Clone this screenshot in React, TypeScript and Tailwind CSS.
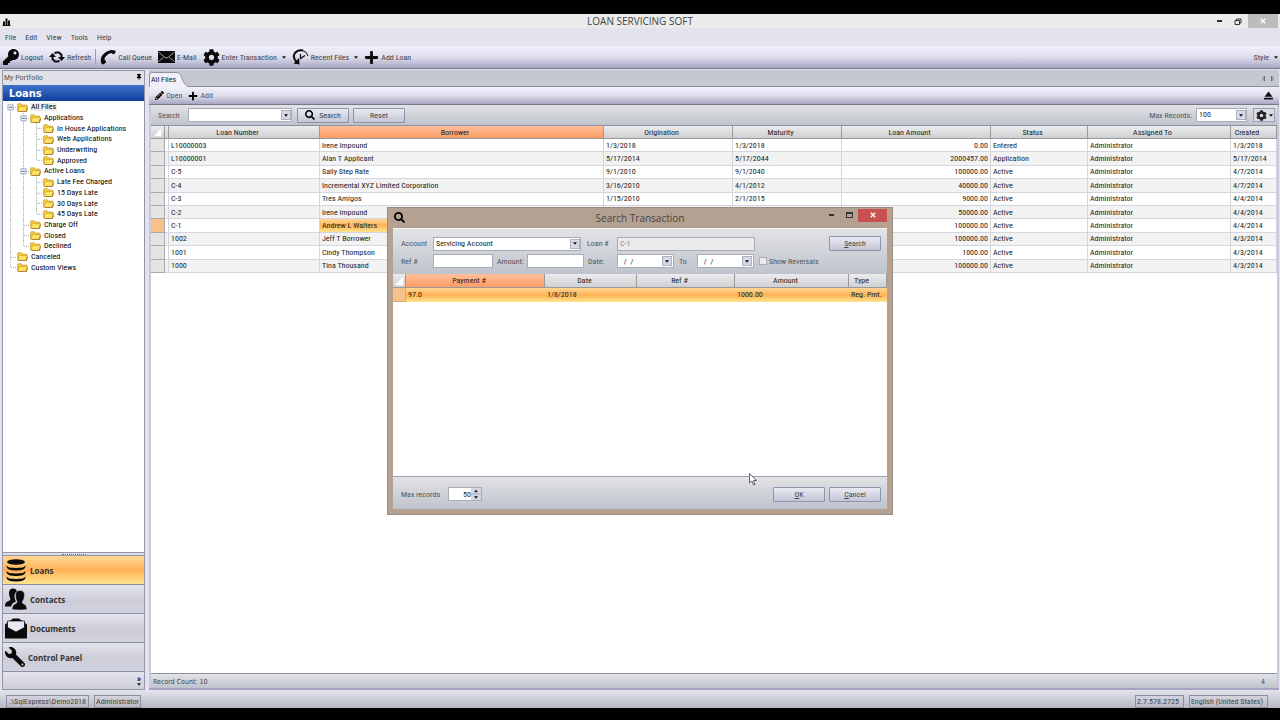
import type { ReactNode } from "react";
import { FaCog, FaKey, FaPencilAlt, FaPlus, FaSearch, FaThumbtack, FaWrench } from "react-icons/fa";

type Guide = "line" | "tee" | "end" | "box" | "boxTop" | "none";

const tree: { label: string; guides: Guide[] }[] = [
  { label: "All Files", guides: ["boxTop"] },
  { label: "Applications", guides: ["line", "box"] },
  { label: "In House Applications", guides: ["line", "line", "tee"] },
  { label: "Web Applications", guides: ["line", "line", "tee"] },
  { label: "Underwriting", guides: ["line", "line", "tee"] },
  { label: "Approved", guides: ["line", "line", "end"] },
  { label: "Active Loans", guides: ["line", "box"] },
  { label: "Late Fee Charged", guides: ["line", "line", "tee"] },
  { label: "15 Days Late", guides: ["line", "line", "tee"] },
  { label: "30 Days Late", guides: ["line", "line", "tee"] },
  { label: "45 Days Late", guides: ["line", "line", "end"] },
  { label: "Charge Off", guides: ["line", "tee"] },
  { label: "Closed", guides: ["line", "tee"] },
  { label: "Declined", guides: ["line", "end"] },
  { label: "Canceled", guides: ["tee"] },
  { label: "Custom Views", guides: ["end"] },
];

const loans = [
  ["L10000003", "Irene Impound", "1/3/2018", "1/3/2018", "0.00", "Entered", "Administrator", "1/3/2018"],
  ["L10000001", "Alan T Applicant", "5/17/2014", "5/17/2044", "2000457.00", "Application", "Administrator", "5/17/2014"],
  ["C-5", "Sally Step Rate", "9/1/2010", "9/1/2040", "100000.00", "Active", "Administrator", "4/7/2014"],
  ["C-4", "Incremental XYZ Limited Corporation", "3/16/2010", "4/1/2012", "40000.00", "Active", "Administrator", "4/7/2014"],
  ["C-3", "Tres Amigos", "1/15/2010", "2/1/2015", "9000.00", "Active", "Administrator", "4/4/2014"],
  ["C-2", "Irene Impound", "", "", "50000.00", "Active", "Administrator", "4/4/2014"],
  ["C-1", "Andrew L Walters", "", "", "100000.00", "Active", "Administrator", "4/4/2014"],
  ["1002", "Jeff T Borrower", "", "", "100000.00", "Active", "Administrator", "4/3/2014"],
  ["1001", "Cindy Thompson", "", "", "1000.00", "Active", "Administrator", "4/3/2014"],
  ["1000", "Tina Thousand", "", "", "100000.00", "Active", "Administrator", "4/3/2014"],
];

const loanColumns = ["Loan Number", "Borrower", "Origination", "Maturity", "Loan Amount", "Status", "Assigned To", "Created"];

const barGradient = "bg-linear-to-b from-[#f1f0fb] via-[#dfdeed] to-[#a8a6c3]";
const greyGradient = "bg-linear-to-b from-[#e2e3e6] to-[#bfc3cc]";
const goldGradient = "bg-linear-to-b from-[#ffd796] via-[#ffb255] to-[#ffe48e]";
const orangeHeader = "bg-linear-to-b from-[#ffc09a] to-[#ff9c66]";
const greyHeader = "bg-linear-to-b from-[#ececee] to-[#cfd0d3]";
const field = "h-[14px] border border-[#a9acb8] bg-white px-[2px] text-[8px] text-[#222]";
const button =
  "flex h-[15px] w-[52px] items-center justify-center gap-1 rounded-[1px] border border-[#8f94ac] bg-linear-to-b from-[#e9eaf2] to-[#c3c6d6] text-[#444]";

function Caret() {
  return (
    <svg viewBox="0 0 6 4" className="h-[3px] w-[4px] shrink-0" fill="#111">
      <path d="M0 0h6L3 4z" />
    </svg>
  );
}

function Folder() {
  return (
    <svg viewBox="0 0 24 20" className="h-[9px] w-[11px] shrink-0">
      <path d="M1 3.500q0-2 2-2h6l2 3h9q2 0 2 2V17H1z" fill="#f4c93a" stroke="#b98c22" strokeWidth="1.200" />
      <path d="M5 8h18l-3 10.500H2z" fill="#ffe566" stroke="#c7972a" strokeWidth="1.200" />
      <path d="M3 19h18l2-9" fill="none" stroke="#8a5c0c" strokeWidth="1.500" />
    </svg>
  );
}

function TreeGuide({ kind }: { kind: Guide }) {
  const boxed = kind === "box" || kind === "boxTop";
  const vertical = kind === "boxTop" ? "M6.500 6v5" : kind === "end" ? "M6.500 0v6" : "M6.500 0v11";
  return (
    <svg viewBox="0 0 13 11" preserveAspectRatio="none" className="h-full w-[13px] shrink-0">
      {kind !== "none" && <path d={vertical} stroke="#aaa" strokeDasharray="1 1" />}
      {kind !== "line" && kind !== "none" && <path d="M7 5.500h6" stroke="#aaa" strokeDasharray="1 1" />}
      {boxed && <rect x="4" y="3" width="5" height="5" fill="#fff" stroke="#98a6bd" />}
      {boxed && <path d="M5 5.500h3" stroke="#4560a0" />}
    </svg>
  );
}

function RefreshIcon() {
  return (
    <svg viewBox="0 0 32 28" className="h-[14px] w-[16px]" fill="none" stroke="#0b0b0b" strokeWidth="4">
      <path d="M7 12v6l5 5h6l3-2M25 16v-6l-5-5h-6l-3 2" />
      <path d="M0 14l7-8 7 8zM18 14h14l-7 8z" fill="#0b0b0b" stroke="none" />
    </svg>
  );
}

function PhoneIcon() {
  return (
    <svg viewBox="0 0 32 30" className="h-[16px] w-[16px]" fill="#0b0b0b">
      <path d="M22 1l8 1q2 1 1 3l-2 4q-1 1-3 0l-4-2Q9 12 9 20l3 4q0 2-1 3l-5 3q-2 0-3-2Q-1 19 5 11 12 3 22 1z" />
    </svg>
  );
}

function MailIcon() {
  return (
    <svg viewBox="0 0 34 24" className="h-[12px] w-[17px]">
      <rect width="34" height="24" fill="#0b0b0b" />
      <path d="M1 2l13 11q3 2 6 0L33 2M1 21l10-8M33 21l-10-8" fill="none" stroke="#dddce9" strokeWidth="1.400" />
    </svg>
  );
}

function RecentIcon() {
  return (
    <svg viewBox="0 0 34 32" className="h-[16px] w-[17px]" fill="none" stroke="#0b0b0b">
      <path d="M9 26Q0 16 6 8 12 1 22 3" strokeWidth="4" />
      <path d="M21 3q9 2 11 11" strokeWidth="2" />
      <path d="M17 10v9l9-6" strokeWidth="2.500" />
      <path d="M3 29l11-11 1 13z" fill="#0b0b0b" stroke="none" />
    </svg>
  );
}

function StackIcon() {
  return (
    <svg viewBox="0 0 44 46" className="h-[23px] w-[22px]" fill="#0b0b0b">
      <ellipse cx="22" cy="6" rx="18" ry="5.500" />
      <path d="M3 13q2 5 19 5t19-5v3q-2 7-19 7T3 16zM3 24q2 5 19 5t19-5v3q-2 7-19 7T3 27zM3 35q2 5 19 5t19-5v3q-2 7-19 7T3 38z" />
    </svg>
  );
}

function PeopleIcon() {
  return (
    <svg viewBox="0 0 44 44" className="h-[22px] w-[22px]" fill="#0b0b0b">
      <path d="M8 10Q8 1 16 1q7 0 8 6-6 3-5 12 1 5 3 8-8 2-10 10H0q0-8 5-10 6-2 6-5-3-5-3-12z" />
      <path d="M21 14q0-9 9-9t9 9q0 8-4 13-1 4 3 5 6 2 6 11-15 2-30 0 0-9 6-11 5-2 4-5-3-5-3-13z" stroke="#d7d8e4" />
    </svg>
  );
}

function DocumentsIcon() {
  return (
    <svg viewBox="0 0 44 42" className="h-[21px] w-[22px]">
      <path d="M0 13L16 1h12l16 12v28H0z" fill="#0b0b0b" />
      <path d="M5 6h34v13L22 28 5 19z" fill="#e9e9f1" stroke="#0b0b0b" strokeWidth="1.500" />
    </svg>
  );
}

function ToolItem({ icon, label, caret }: { icon: ReactNode; label: string; caret?: boolean }) {
  return (
    <button className="flex items-center gap-[2px] whitespace-nowrap">
      {icon}
      <span>{label}</span>
      {caret && <span className="ml-[3px]"><Caret /></span>}
    </button>
  );
}

function ComboBox({ label, value, className }: { label: string; value: string; className: string }) {
  return (
    <span className={`relative flex ${className}`}>
      <select aria-label={label} className={`${field} w-full appearance-none leading-none`}>
        <option>{value}</option>
      </select>
      <span className="pointer-events-none absolute inset-y-[2px] right-[1px] flex w-[10px] items-center justify-center border border-[#adb1c4] bg-[#d5d8e6]">
        <Caret />
      </span>
    </span>
  );
}

function DateBox({ label, id }: { label: string; id: string }) {
  return (
    <span className="flex h-[14px] w-[57px] items-center border border-[#a9acb8] bg-white pr-[1px]">
      <input id={id} aria-label={label} defaultValue=" /  /" className="w-full min-w-0 px-[4px] text-[8px] text-[#222]" />
      <button aria-label={`Pick ${label}`} className="flex h-[10px] w-[10px] shrink-0 items-center justify-center border border-[#adb1c4] bg-[#d5d8e6]">
        <Caret />
      </button>
    </span>
  );
}

function NavItem({ icon, label, active }: { icon: ReactNode; label: string; active?: boolean }) {
  return (
    <button
      className={`flex h-[29px] w-full items-center gap-[3px] border-b border-[#8c8fa3] pl-[2px] font-['Open_Sans',sans-serif] text-[8px] font-bold text-[#333] ${
        active ? goldGradient : "bg-linear-to-b from-[#e4e4ee] via-[#cccdd9] via-55% to-[#d2d3de]"
      }`}
    >
      {icon}
      {label}
    </button>
  );
}

function Sidebar() {
  return (
    <aside className="flex w-[143px] shrink-0 flex-col border border-[#9496a8] bg-white">
      <div className="flex h-[14px] items-center justify-between bg-[#e1e2e9] px-px pb-[2px] text-[#555]">
        <span>My Portfolio</span>
        <FaThumbtack className="mr-[1px] size-[6px] text-black" />
      </div>
      <h2 className="flex h-[16px] items-center bg-linear-to-b from-[#3f73c8] to-[#0d3f9c] pl-[6px] font-['DejaVu_Sans_Condensed','DejaVu_Sans',sans-serif] text-[11px] font-bold text-white">
        Loans
      </h2>
      <ul className="grid h-[172px] auto-rows-fr pt-px pl-[1px]">
        {tree.map(({ label, guides }) => (
          <li key={label} className="flex min-h-0 items-center whitespace-nowrap leading-none">
            {guides.map((kind, i) => (
              <TreeGuide key={i} kind={kind} />
            ))}
            <Folder />
            <span className={`ml-[2px] px-px ${label === "All Files" ? "bg-[#ececec]" : ""}`}>{label}</span>
          </li>
        ))}
      </ul>
      <div className="flex-1" />
      <div className="flex h-[4px] items-center justify-center border-y border-[#9496a8] bg-[#dcdde6]">
        <span className="w-[24px] border-t border-dotted border-[#777]" />
      </div>
      <nav>
        <NavItem icon={<StackIcon />} label="Loans" active />
        <NavItem icon={<PeopleIcon />} label="Contacts" />
        <NavItem icon={<DocumentsIcon />} label="Documents" />
        <NavItem icon={<FaWrench className="size-[20px] -scale-x-100 text-[#0b0b0b]" />} label="Control Panel" />
      </nav>
      <div className="flex h-[17px] flex-col items-end justify-center bg-linear-to-b from-[#e4e4ee] to-[#cccdd9] pr-[3px] leading-none">
        <span className="text-[9px] leading-[7px] font-bold text-black">»</span>
        <Caret />
      </div>
    </aside>
  );
}

function LoanTable() {
  return (
    <table className="h-[147px] w-full table-fixed border-separate border-spacing-0 text-[#222]">
      <colgroup>
        <col className="w-[14px]" />
        <col className="w-[4px]" />
        <col className="w-[151px]" />
        <col className="w-[284px]" />
        <col className="w-[129px]" />
        <col className="w-[109px]" />
        <col className="w-[149px]" />
        <col className="w-[97px]" />
        <col className="w-[143px]" />
        <col className="w-[46px]" />
      </colgroup>
      <thead>
        <tr className="h-[13px]">
          <th className={`${greyHeader} border-r border-b border-[#999] p-0`}>
            <svg viewBox="0 0 12 12" className="ml-[2px] size-[9px]"><path d="M11 1v10H1z" fill="#fff" /></svg>
          </th>
          <th className={`${greyHeader} border-r border-b border-[#999] p-0`} />
          {loanColumns.map((name) => (
            <th
              key={name}
              className={`border-r border-b border-[#999] pt-[2px] pr-[13px] pb-0 pl-0 leading-none font-normal whitespace-nowrap ${
                name === "Borrower" ? orangeHeader : greyHeader
              }`}
            >
              {name}
            </th>
          ))}
        </tr>
      </thead>
      <tbody>
        {loans.map((row) => {
          const selected = row[0] === "C-1";
          return (
            <tr key={row[0]} className="even:bg-[#f2f2f3]">
              <td className={`border-r border-b border-[#aaa] p-0 ${selected ? "bg-[#f9c18a]" : "bg-[#e4e4e4]"}`} />
              <td className="border-r border-b border-[#d4d5de] p-0" />
              {row.map((value, i) => (
                <td
                  key={i}
                  className={`border-r border-b border-[#d4d5de] px-[2px] pt-px pb-0 leading-none whitespace-nowrap ${i === 4 ? "text-right" : ""} ${
                    selected && i === 1 ? goldGradient : ""
                  }`}
                >
                  {value}
                </td>
              ))}
            </tr>
          );
        })}
      </tbody>
    </table>
  );
}

function FilesPanel() {
  return (
    <main className="flex min-w-0 flex-1 flex-col border-b-2 border-[#a5a3c0]">
      <div className="flex h-[17px] items-end justify-between border-b border-[#8e90a0] bg-[#c6c8d1]">
        <div className="relative -mb-px h-[15px] w-[40px]">
          <svg viewBox="0 0 40 15" className="absolute inset-0 size-full">
            <path d="M.500 15V3Q.500.500 3 .500h25q3 0 4 3 3 10 8 11.500" fill="#f0effa" stroke="#8e90a0" />
          </svg>
          <span className="relative flex h-full items-center pl-[2px] text-[#222]">All Files</span>
        </div>
        <svg viewBox="0 0 28 14" className="mr-[4px] mb-[4px] h-[7px] w-[14px]" fill="none" stroke="#555" strokeWidth="1.500">
          <path d="M7 2v10L3 7zM21 2v10l4-5z" />
        </svg>
      </div>
      <div className={`flex h-[18px] items-center justify-between border-b border-[#77778c] pr-[6px] pl-[6px] text-[#555] ${barGradient}`}>
        <div className="flex items-center gap-[6px]">
          <ToolItem icon={<FaPencilAlt className="size-[9px] text-black" />} label="Open" />
          <ToolItem icon={<FaPlus className="size-[10px] text-black" />} label="Add" />
        </div>
        <svg viewBox="0 0 16 16" className="size-[9px]"><path d="M8 1l7 9H1zM0 12h16v3H0z" fill="#111" /></svg>
      </div>
      <div className="flex flex-1 flex-col border-x-2 border-[#c9c9dc] bg-white">
        <div className={`flex h-[21px] items-center justify-between border-b border-[#8e90a0] pr-[2px] pl-[7px] text-[#555] ${greyGradient}`}>
          <div className="flex items-center">
            <span className="w-[30px]">Search</span>
            <ComboBox label="Search" value="" className="w-[104px]" />
            <button className={`${button} ml-[5px]`}>
              <FaSearch className="size-[10px] text-black" />
              Search
            </button>
            <button className={`${button} ml-[4px]`}>Reset</button>
          </div>
          <div className="flex items-center">
            <span>Max Records:</span>
            <ComboBox label="Max Records" value="100" className="ml-[4px] w-[51px]" />
            <button aria-label="Options" className="ml-[6px] flex h-[14px] w-[22px] items-center justify-center gap-[2px] border border-[#9a9fb5] bg-[#d9dbe5]">
              <FaCog className="size-[11px] text-[#222]" />
              <Caret />
            </button>
          </div>
        </div>
        <LoanTable />
        <div className="flex-1" />
        <div
          className={`flex h-[15px] items-center justify-between border-t border-[#8e90a0] pt-[2px] pr-[12px] pl-[2px] font-['DejaVu_Sans_Condensed','DejaVu_Sans',sans-serif] text-[7px] text-[#444] ${greyGradient}`}
        >
          <span>Record Count: 10</span>
          <span>4</span>
        </div>
      </div>
    </main>
  );
}

function SearchDialog() {
  return (
    <section
      role="dialog"
      aria-label="Search Transaction"
      className="flex h-[308px] w-[506px] flex-col border border-[#9c8b7e] bg-[#b5a191] px-[5px] pb-[5px]"
    >
      <header className="relative flex h-[20px] shrink-0 items-center justify-center font-['Open_Sans',sans-serif] text-[10px] text-[#444]">
        <FaSearch className="absolute top-[4px] left-[1px] size-[11px] text-black" />
        <h1>Search Transaction</h1>
        <div className="absolute top-0 right-0 flex h-[14px] items-center">
          <button aria-label="Minimize" className="mr-[12px] h-[2px] w-[5px] bg-[#333]" />
          <button aria-label="Maximize" className="mr-[5px] h-[6px] w-[7px] border border-t-2 border-[#333]" />
          <button aria-label="Close" className="flex h-[13px] w-[29px] items-center justify-center bg-[#c9504f] text-white">
            <svg viewBox="0 0 8 8" className="size-[6px]" stroke="#fff" strokeWidth="1.800"><path d="M1 1l6 6M7 1L1 7" /></svg>
          </button>
        </div>
      </header>
      <form className={`flex h-[46px] shrink-0 flex-col gap-[3px] border-t border-[#f4f4f4] pt-[7px] pr-[6px] pl-[8px] whitespace-nowrap text-[#555] ${greyGradient}`}>
        <div className="flex items-center">
          <span className="w-[32px]">Account</span>
          <ComboBox label="Account" value="Servicing Account" className="w-[148px]" />
          <label htmlFor="loan" className="ml-[6px] w-[30px]">Loan #</label>
          <input id="loan" defaultValue="C-1" disabled className="h-[14px] w-[138px] border border-[#a9acb8] bg-[#ebebec] px-[2px] text-[8px] text-[#888]" />
          <button type="button" className={`${button} ml-auto`}>
            <span><u>S</u>earch</span>
          </button>
        </div>
        <div className="flex items-center">
          <label htmlFor="ref" className="w-[32px]">Ref #</label>
          <input id="ref" className={`${field} w-[60px]`} />
          <label htmlFor="amount" className="ml-[4px] w-[30px]">Amount:</label>
          <input id="amount" className={`${field} w-[57px]`} />
          <label htmlFor="from" className="ml-[4px] w-[29px]">Date:</label>
          <DateBox id="from" label="Date from" />
          <label htmlFor="to" className="ml-[5px] w-[18px]">To</label>
          <DateBox id="to" label="Date to" />
          <input id="reversals" type="checkbox" className="ml-[5px] size-[8px] appearance-none border border-[#a9acb8] bg-[#ececf0]" />
          <label htmlFor="reversals" className="ml-[2px]">Show Reversals</label>
        </div>
      </form>
      <div className="flex-1 bg-white">
        <table className="w-full table-fixed border-separate border-spacing-0 text-[#222]">
          <colgroup>
            <col className="w-[13px]" />
            <col className="w-[139px]" />
            <col className="w-[92px]" />
            <col className="w-[98px]" />
            <col className="w-[114px]" />
            <col className="w-[38px]" />
          </colgroup>
          <thead>
            <tr className="h-[14px]">
              <th className={`${greyHeader} border-r border-b border-[#999] p-0`}>
                <svg viewBox="0 0 12 12" className="ml-[1px] size-[10px]"><path d="M11 1v10H1z" fill="#fff" /></svg>
              </th>
              {["Payment #", "Date", "Ref #", "Amount", "Type"].map((name, i) => (
                <th
                  key={name}
                  className={`border-r border-b border-[#999] pt-px pr-[12px] pb-0 pl-0 leading-none font-normal whitespace-nowrap ${
                    i === 0 ? orangeHeader : greyHeader
                  }`}
                >
                  {name}
                </th>
              ))}
            </tr>
          </thead>
          <tbody>
            <tr className="h-[14px]">
              <td className="border-r border-b border-[#d9a877] bg-[#f9c18a] p-0" />
              {["97.0", "1/8/2018", "", "1000.00", "Reg. Pmt."].map((value, i) => (
                <td key={i} className={`px-[2px] py-0 leading-none whitespace-nowrap ${goldGradient}`}>
                  {value}
                </td>
              ))}
            </tr>
          </tbody>
        </table>
      </div>
      <footer className={`flex h-[33px] shrink-0 items-center border-t border-[#a0a3ae] pt-[2px] pr-[6px] pl-[8px] text-[#555] ${greyGradient}`}>
        <label htmlFor="max" className="w-[47px]">Max records</label>
        <span className="flex h-[14px] w-[34px] items-center border border-[#a9acb8] bg-white">
          <input id="max" defaultValue="50" className="w-[22px] text-right text-[8px] text-[#222]" />
          <span className="flex h-full flex-1 flex-col bg-[#d5d8e6]">
            <button aria-label="More" className="flex flex-1 rotate-180 items-center justify-center border-t border-[#a9acb8]"><Caret /></button>
            <button aria-label="Fewer" className="flex flex-1 items-center justify-center"><Caret /></button>
          </span>
        </span>
        <button className={`${button} ml-auto`}><span><u>O</u>K</span></button>
        <button className={`${button} ml-[4px]`}><span><u>C</u>ancel</span></button>
      </footer>
    </section>
  );
}

export default function App() {
  return (
    <div className="flex min-h-screen flex-col bg-black pt-[14px] pb-[12px] font-['Roboto_Condensed','Roboto',sans-serif] text-[8px] leading-[11px]">
      <div className="relative flex flex-1 flex-col bg-[#e3e3ee]">
        <header className="flex h-[14px] items-center justify-between bg-[#ebebeb] pr-[2px] pl-[2px]">
          <div className="flex-1">
            <svg viewBox="0 0 18 18" className="size-[9px]"><path d="M2 9h4v7H2zM7 3h4v13H7zM12 7h4v9h-4zM1 16h16v2H1z" fill="#111" /></svg>
          </div>
          <span className="font-['Open_Sans',sans-serif] text-[10px] text-[#444]">LOAN SERVICING SOFT</span>
          <div className="flex h-full flex-1 items-center justify-end">
            <button aria-label="Minimize" className="mr-[12px] h-[2px] w-[5px] bg-[#333]" />
            <button aria-label="Restore" className="mr-[6px]">
              <svg viewBox="0 0 16 14" className="h-[7px] w-[8px]" fill="none" stroke="#333" strokeWidth="2"><path d="M2 5h9v8H2zM5 5V2h9v8h-3" /></svg>
            </button>
            <button aria-label="Close" className="flex h-full w-[30px] items-center justify-center bg-[#bcbcbc]">
              <svg viewBox="0 0 8 8" className="size-[6px]" stroke="#fff" strokeWidth="1.500"><path d="M1 1l6 6M7 1L1 7" /></svg>
            </button>
          </div>
        </header>
        <nav className="flex h-[18px] items-center gap-[9px] pl-[5px] text-[#444]">
          {["File", "Edit", "View", "Tools", "Help"].map((name) => (
            <button key={name}>{name}</button>
          ))}
        </nav>
        <div className={`flex h-[23px] items-center justify-between border-b border-[#77778c] pr-[2px] pl-[3px] text-[#444] ${barGradient}`}>
          <div className="flex items-center gap-[6px]">
            <ToolItem icon={<FaKey className="size-[16px] text-[#0b0b0b]" />} label="Logout" />
            <ToolItem icon={<RefreshIcon />} label="Refresh" />
            <span className="-mx-[2px] h-[16px] border-l border-[#9a9bb8]" />
            <ToolItem icon={<PhoneIcon />} label="Call Queue" />
            <ToolItem icon={<MailIcon />} label="E-Mail" />
            <ToolItem icon={<FaCog className="size-[17px] text-[#0b0b0b]" />} label="Enter Transaction" caret />
            <ToolItem icon={<RecentIcon />} label="Recent Files" caret />
            <ToolItem icon={<FaPlus className="size-[15px] text-[#0b0b0b]" />} label="Add Loan" />
          </div>
          <ToolItem icon={null} label="Style" caret />
        </div>
        <div className="flex flex-1 gap-[4px] pt-px pr-[1px] pl-[2px]">
          <Sidebar />
          <FilesPanel />
        </div>
        <footer className="flex h-[18px] items-end justify-between bg-linear-to-b from-[#e4e4ee] to-[#b4b7c2] pr-[12px] pl-[6px] text-[#444]">
          <div className="flex gap-[5px]">
            <span className="h-[13px] border border-[#8c8f9c] px-[2px]">.\SqlExpress\Demo2018</span>
            <span className="h-[13px] border border-[#8c8f9c] px-px">Administrator</span>
          </div>
          <div className="flex gap-[5px]">
            <span className="h-[13px] border border-[#8c8f9c] pr-[4px] pl-px">2.7.578.2725</span>
            <span className="h-[13px] border border-[#8c8f9c] pr-[4px] pl-px">English (United States)</span>
          </div>
        </footer>
        <div className="absolute inset-0 flex items-center justify-center">
          <div className="relative">
            <SearchDialog />
            <svg viewBox="0 0 16 26" className="absolute right-[136px] bottom-[29px] h-[13px] w-[8px]">
              <path d="M1 1v19l5-4 3 8 3-1-3-8h6z" fill="#fff" stroke="#333" strokeWidth="1.500" />
            </svg>
          </div>
        </div>
      </div>
    </div>
  );
}
